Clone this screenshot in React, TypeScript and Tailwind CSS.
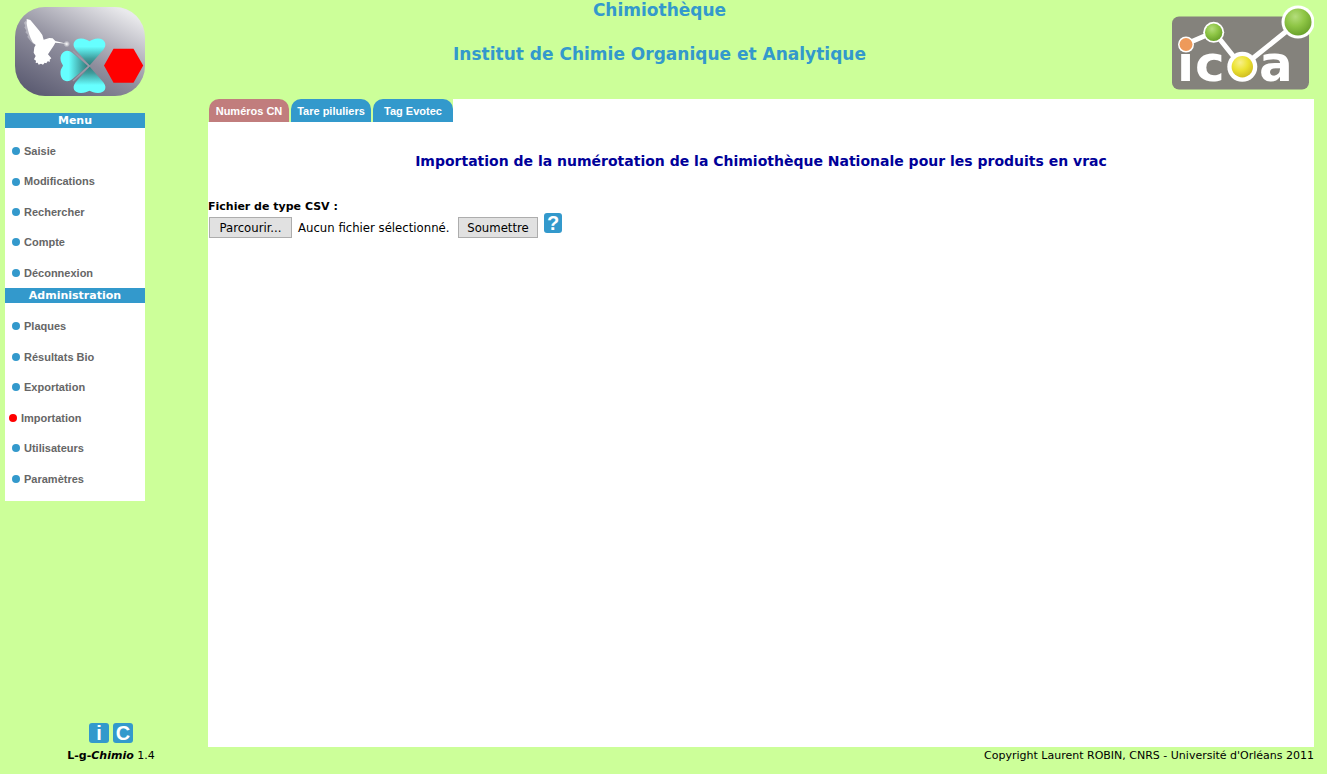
import React from 'react';

const verdana = "font-['Verdana','DejaVu_Sans',sans-serif]";
const arial = "font-['Liberation_Sans',Arial,sans-serif]";
const tahoma = "font-['DejaVu_Sans_Condensed','DejaVu_Sans',sans-serif]";

const menuItems = ['Saisie', 'Modifications', 'Rechercher', 'Compte', 'Déconnexion'];
const adminItems = ['Plaques', 'Résultats Bio', 'Exportation', 'Importation', 'Utilisateurs', 'Paramètres'];
const tabs = ['Numéros CN', 'Tare piluliers', 'Tag Evotec'];

function AppLogo() {
  return (
    <svg width="130" height="90" viewBox="15 7 130 90" role="img" aria-label="Chimiothèque">
      <defs>
        <linearGradient id="plate" x1="0.15" y1="0.95" x2="0.85" y2="0.05">
          <stop offset="0" stopColor="#5e5e74" />
          <stop offset="0.45" stopColor="#8e8d9c" />
          <stop offset="1" stopColor="#e9e9ec" />
        </linearGradient>
        <linearGradient id="leafTop" x1="0" y1="0" x2="0" y2="1">
          <stop offset="0.3" stopColor="#66ffff" />
          <stop offset="0.75" stopColor="#3f9c9c" />
          <stop offset="1" stopColor="#337c7c" />
        </linearGradient>
        <linearGradient id="leafBottom" x1="0" y1="1" x2="0" y2="0">
          <stop offset="0.3" stopColor="#66ffff" />
          <stop offset="0.75" stopColor="#3f9c9c" />
          <stop offset="1" stopColor="#337c7c" />
        </linearGradient>
        <linearGradient id="leafLeft" x1="0" y1="0" x2="1" y2="0">
          <stop offset="0.3" stopColor="#66ffff" />
          <stop offset="0.8" stopColor="#3f9c9c" />
          <stop offset="1" stopColor="#337c7c" />
        </linearGradient>
        <radialGradient id="spark">
          <stop offset="0" stopColor="#fff" />
          <stop offset="1" stopColor="#fff" stopOpacity="0" />
        </radialGradient>
      </defs>
      <rect x="15" y="7" width="130" height="89" rx="30" fill="url(#plate)" />
      <path
        fill="url(#leafTop)"
        d="M89.5 65.5L75.5 49.5C71.5 44.5 74 38.5 81 38.5C85 38.5 87 40 89.5 41.2C92 40 94 38.5 98 38.5C105 38.5 107.5 44.5 103.5 49.5Z"
      />
      <path
        fill="url(#leafBottom)"
        d="M89.5 66.5L75.5 82.5C71.5 87.5 74 93 81 93C85 93 87 92 89.5 90.8C92 92 94 93 98 93C105 93 107.5 87.5 103.5 82.5Z"
      />
      <path
        fill="url(#leafLeft)"
        d="M88 66L72.5 53C66 47.5 60.5 53 60.5 58.5C60.5 62 62 63.5 63 65.5C62 68 60.5 69 60.5 73C60.5 80 66.5 84 72.5 79Z"
      />
      <path d="M73 51L89.2 66L73 81" fill="none" stroke="#9c9ba9" strokeWidth="1.4" />
      <path fill="#f00" d="M104 65.5L113.5 48.7H133.5L143.2 65.5L133.5 82.7H113.5Z" />
      <g transform="scale(0.33333)">
        <path
          fill="#fff"
          fillOpacity="0.35"
          d="M78 62L72 68L76 78L73 82L79 92L76 97L84 105L82 111L92 124L101 133L108 132L92 90Z"
        />
        <path
          fill="#fff"
          d="M80 57L91 60L103 74L118 92L127 105L131 119L148 114L158 115L166 123L200 131L166 128L161 137L152 151L144 163L154 175L149 179L150 185L143 184L139 190L134 188L129 194L123 191L116 194L113 188L107 189L108 182L102 178L107 168L101 158L103 142L107 135L98 127L92 115L88 104L85 94L82 82L80 70Z"
        />
        <circle cx="200" cy="132" r="10" fill="url(#spark)" />
      </g>
    </svg>
  );
}

function IcoaLogo() {
  return (
    <svg width="143" height="94" viewBox="11 5 143 94" role="img" aria-label="ICOA">
      <defs>
        <radialGradient id="green" cx="0.4" cy="0.3" r="0.7">
          <stop offset="0" stopColor="#b4dd7c" />
          <stop offset="0.5" stopColor="#8fc646" />
          <stop offset="1" stopColor="#6ba32c" />
        </radialGradient>
        <radialGradient id="yellow" cx="0.4" cy="0.3" r="0.75">
          <stop offset="0" stopColor="#f8f08a" />
          <stop offset="0.5" stopColor="#ece332" />
          <stop offset="1" stopColor="#cdb920" />
        </radialGradient>
      </defs>
      <rect x="12" y="16.5" width="137" height="73" rx="7" fill="#84827c" />
      <g fill="#fff" fontFamily="'DejaVu Sans', sans-serif" fontWeight="700" fontSize="50">
        <text x="17" y="81">ı</text>
        <text x="35" y="81">c</text>
        <text x="99" y="81">a</text>
      </g>
      <path d="M26 44L54 32L82 67L138 22" fill="none" stroke="#fff" strokeWidth="5" />
      <g fill="#fff">
        <circle cx="26" cy="44.5" r="8" />
        <circle cx="53.7" cy="32.3" r="10.5" />
        <circle cx="82.3" cy="66.8" r="15" />
        <circle cx="138" cy="22" r="16.5" />
      </g>
      <circle cx="26" cy="44.5" r="6.5" fill="#ee9a5a" />
      <circle cx="53.7" cy="32.3" r="8.7" fill="url(#green)" />
      <circle cx="82.3" cy="66.8" r="10.7" fill="url(#yellow)" />
      <circle cx="138" cy="22" r="13.5" fill="url(#green)" />
    </svg>
  );
}

function MenuSection({ title, items, active }: { title: string; items: string[]; active?: string }) {
  return (
    <section>
      <h2 className="bg-[#3399cc] pt-px text-center text-[11px] leading-[14px] font-bold text-white">{title}</h2>
      <ul className={`${arial} flex flex-col bg-white pt-2 text-[11px] font-bold text-[#666] ${active ? 'h-[198px] pb-[7px]' : 'h-[160px]'}`}>
        {items.map((item) => (
          <li key={item} className="flex flex-1 items-center">
            <a href="#" className={`flex items-center gap-1 ${item === active ? 'pl-1' : 'pl-[7px]'}`}>
              <span className={`size-2 rounded-full ${item === active ? 'bg-[#ff0000]' : 'bg-[#3399cc]'}`} />
              {item}
            </a>
          </li>
        ))}
      </ul>
    </section>
  );
}

export default function App() {
  return (
    <div className={`${verdana} flex min-h-screen flex-col bg-[#ccff99] pr-[13px] pl-[5px] text-[11px] text-black`}>
      <header className="grid h-[99px] grid-cols-[1fr_auto_1fr] items-start">
        <div className="pt-[7px] pl-[10px]">
          <AppLogo />
        </div>
        <div className="flex flex-col gap-6 text-center text-[17px] leading-5 font-bold text-[#3399cc]">
          <h1>Chimiothèque</h1>
          <p>Institut de Chimie Organique et Analytique</p>
        </div>
        <div className="justify-self-end pt-[5px]">
          <IcoaLogo />
        </div>
      </header>

      <div className="grid flex-1 grid-cols-[203px_1fr]">
        <aside className="flex flex-col justify-between pt-[14px]">
          <nav className="w-[140px]" aria-label="Menu">
            <MenuSection title="Menu" items={menuItems} />
            <MenuSection title="Administration" items={adminItems} active="Importation" />
          </nav>
          <div className={`${arial} flex justify-center gap-1 pb-1 pl-[9px] text-[20px] leading-5 font-bold text-white`}>
            <a href="#" className="h-5 w-5 rounded-[3px] bg-[#3399cc] text-center">i</a>
            <a href="#" className="h-5 w-5 rounded-[3px] bg-[#3399cc] text-center">C</a>
          </div>
        </aside>

        <main className="bg-white">
          <nav className={`${arial} flex w-fit gap-[2px] bg-[#ccff99] pl-px text-[11px] font-bold text-white`} aria-label="Onglets">
            {tabs.map((tab, i) => (
              <a
                key={tab}
                href="#"
                className={`flex h-[23px] w-20 items-center justify-center rounded-t-[10px] pt-px whitespace-nowrap ${i === 0 ? 'bg-[#c17d7d]' : 'bg-[#3399cc]'}`}
              >
                {tab}
              </a>
            ))}
          </nav>
          <h2 className="pt-[29px] text-center text-[14px] leading-5 font-bold text-[#000099]">
            Importation de la numérotation de la Chimiothèque Nationale pour les produits en vrac
          </h2>
          <form className="pt-7">
            <label htmlFor="csv" className="block pt-px leading-[13px] font-bold">Fichier de type CSV :</label>
            <div className={`${tahoma} flex items-start pl-px text-[13px] leading-5`}>
              <input id="csv" type="file" accept=".csv" className="sr-only" />
              <label htmlFor="csv" className="mt-1 flex h-[21px] w-[83px] items-center justify-center border border-[#adadad] bg-[#e1e1e1] pt-px">
                Parcourir...
              </label>
              <span className="mt-1 w-[160px] pl-[6px] leading-[22px] whitespace-nowrap">Aucun fichier sélectionné.</span>
              <button type="button" className="mt-1 ml-[6px] flex h-[21px] w-20 items-center justify-center border border-[#adadad] bg-[#e1e1e1] pt-px">
                Soumettre
              </button>
              <a href="#" className={`${arial} ml-[6px] h-5 w-[18px] rounded-[3px] bg-[#3399cc] text-center text-[20px] leading-5 font-bold text-white`}>
                ?
              </a>
            </div>
          </form>
        </main>
      </div>

      <footer className="grid h-[27px] grid-cols-[203px_1fr] pt-px leading-4">
        <p className="pl-[9px] text-center">
          <b>L-g-<i>Chimio</i></b> 1.4
        </p>
        <p className="text-right">Copyright Laurent ROBIN, CNRS - Université d'Orléans 2011</p>
      </footer>
    </div>
  );
}
